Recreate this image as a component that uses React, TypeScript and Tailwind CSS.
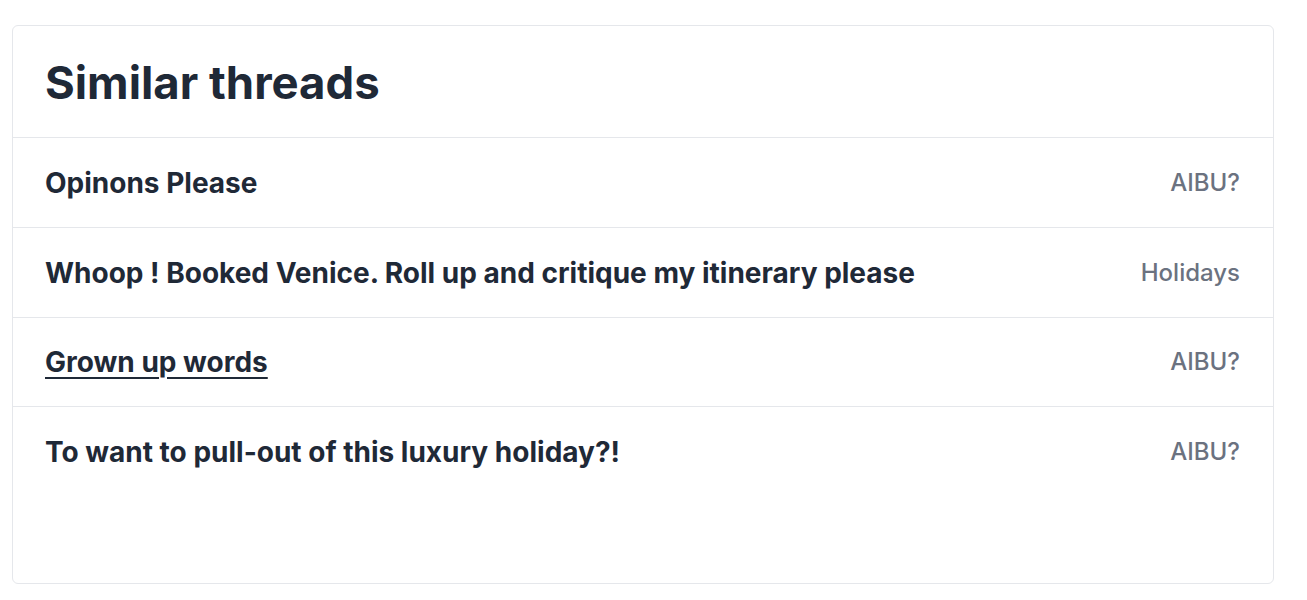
import React from "react";

const rows = [
  { title: "Opinons Please", cat: "AIBU?", underline: false },
  { title: "Whoop ! Booked Venice. Roll up and critique my itinerary please", cat: "Holidays", underline: false },
  { title: "Grown up words", cat: "AIBU?", underline: true },
  { title: "To want to pull-out of this luxury holiday?!", cat: "AIBU?", underline: false },
];

export default function App() {
  return (
    <div className="w-[1307px] h-[600px] bg-white pt-[25px] pl-[12px]" style={{ fontFamily: "Inter, 'Liberation Sans', sans-serif" }}>
      <div className="w-[1262px] h-[559px] border border-[#e5e7eb] rounded-[6px] flex flex-col">
        <div className="h-[112px] flex items-center px-[32px] border-b border-[#e5e7eb]">
          <h2 className="text-[45.5px] font-bold text-[#1f2937] leading-none pt-[2px]">Similar threads</h2>
        </div>
        {rows.map((r, i) => (
          <div
            key={i}
            className={`${i === 2 ? "h-[89px]" : "h-[90px]"} flex items-center justify-between pl-[32px] pr-[33px] ${i < rows.length - 1 ? "border-b border-[#e5e7eb]" : ""}`}
          >
            <span className={`text-[28px] font-bold text-[#1f2937] ${r.underline ? "underline underline-offset-[5px] decoration-[2px]" : ""}`}>
              {r.title}
            </span>
            <span className="text-[24px] font-medium text-[#6b7280]">{r.cat}</span>
          </div>
        ))}
      </div>
    </div>
  );
}
